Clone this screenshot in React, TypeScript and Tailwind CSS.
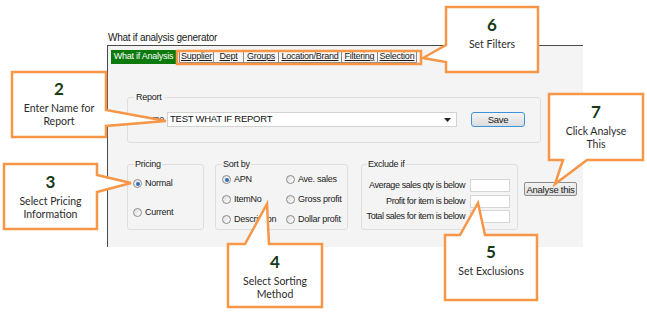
import React from "react";

const ORANGE = "#f79646";

function Radio({ checked = false }: { checked?: boolean }) {
  return (
    <span className="flex h-[9px] w-[9px] shrink-0 items-center justify-center rounded-full border border-[#8c8c8c] bg-linear-to-br from-[#dcdcdc] to-white">
      {checked && <span className="h-[4px] w-[4px] rounded-full bg-[#2f6db5]" />}
    </span>
  );
}

function Option({ label, checked }: { label: string; checked?: boolean }) {
  return (
    <div className="flex h-[13px] items-center gap-[3px]">
      <Radio checked={checked} />
      <span>{label}</span>
    </div>
  );
}

function Callout({
  left,
  top,
  width,
  num,
  lines,
}: {
  left: string;
  top: string;
  width: string;
  num: string;
  lines: string[];
}) {
  return (
    <div className={`absolute flex flex-col items-center font-['Lato',sans-serif] ${left} ${top} ${width}`}>
      <div className="text-[17px] font-bold leading-[16px] text-[#173a17]">{num}</div>
      <div className="mt-[5px] text-center text-[10.5px] leading-[13px] text-[#2b2b2b]">
        {lines.map((l) => (
          <div key={l}>{l}</div>
        ))}
      </div>
    </div>
  );
}

const tabs = [
  { label: "Supplier", w: "w-[35px]" },
  { label: "Dept", w: "w-[31px]" },
  { label: "Groups", w: "w-[36px]" },
  { label: "Location/Brand", w: "w-[64px]" },
  { label: "Filtering", w: "w-[37px]" },
  { label: "Selection", w: "w-[40px]" },
];

export default function App() {
  return (
    <div className="relative h-[313px] w-[647px] overflow-hidden bg-white font-['Liberation_Sans',sans-serif] text-[#1a1a1a]">
      {/* Title */}
      <div className="pl-[108px] pt-[31px] text-[10px] leading-[13px] tracking-[-0.25px]">What if analysis generator</div>

      {/* Window */}
      <div className="ml-[107px] mt-[1px] h-[202px] w-[476px] border-l border-t border-[#4a4a4a] bg-[#f4f4f4] text-[9px] tracking-[-0.25px]">
        {/* Tabs */}
        <div className="flex items-start pl-[3px] pt-[4px]">
          <div className="flex h-[14px] w-[65px] items-center justify-center bg-[#0b7a0b] text-white">What if Analysis</div>
          <div className="ml-[3px] mt-px flex">
            {tabs.map((t) => (
              <div
                key={t.label}
                className={`-ml-px flex h-[12px] items-center justify-center border border-[#8a8a8a] bg-[#f7f7f7] underline first:ml-0 ${t.w}`}
              >
                {t.label}
              </div>
            ))}
          </div>
        </div>

        {/* Report */}
        <fieldset className="ml-[19px] mt-[27px] h-[52px] w-[414px] rounded-[3px] border border-[#dedede]">
          <legend className="ml-[6px] px-[2px] leading-[12px]">Report</legend>
          <div className="flex items-center pl-[13px] pt-[9px]">
            <span className="w-[26px]">Name</span>
            <div className="flex h-[15px] w-[290px] items-center justify-between border border-[#d2d2d2] bg-white pl-[2px] pr-[5px] text-[9.5px] text-[#111]">
              <span>TEST WHAT IF REPORT</span>
              <svg width="7" height="4" viewBox="0 0 7 4">
                <polygon points="0,0 7,0 3.5,4" fill="#222" />
              </svg>
            </div>
            <button className="ml-[14px] h-[15px] w-[54px] rounded-[3px] border border-[#3d93da] bg-linear-to-b from-[#f4f4f4] to-[#dcdcdc] text-[9.5px]">
              Save
            </button>
          </div>
        </fieldset>

        {/* Lower row */}
        <div className="ml-[19px] mt-[15px] flex items-start">
          <fieldset className="h-[72px] w-[77px] rounded-[3px] border border-[#dedede]">
            <legend className="ml-[6px] px-[1px] leading-[12px]">Pricing</legend>
            <div className="flex flex-col gap-[16px] pl-[5px] pt-[7px]">
              <Option label="Normal" checked />
              <Option label="Current" />
            </div>
          </fieldset>

          <fieldset className="ml-[11px] h-[72px] w-[133px] rounded-[3px] border border-[#dedede]">
            <legend className="ml-[6px] px-[1px] leading-[12px]">Sort by</legend>
            <div className="grid grid-cols-[64px_1fr] gap-y-[7px] pl-[6px] pt-[3px]">
              <Option label="APN" checked />
              <Option label="Ave. sales" />
              <Option label="ItemNo" />
              <Option label="Gross profit" />
              <Option label="Description" />
              <Option label="Dollar profit" />
            </div>
          </fieldset>

          <fieldset className="ml-[13px] h-[72px] w-[157px] rounded-[3px] border border-[#dedede]">
            <legend className="ml-[5px] px-[1px] leading-[12px]">Exclude if</legend>
            <div className="grid grid-cols-[1fr_40px] items-center gap-x-[5px] gap-y-[2px] pr-[7px] pt-[9px] tracking-[-0.4px]">
              <span className="text-right">Average sales qty is below</span>
              <div className="h-[13px] border border-[#d6d6d6] bg-white" />
              <span className="text-right">Profit for item is below</span>
              <div className="h-[13px] border border-[#d6d6d6] bg-white" />
              <span className="text-right">Total sales for item is below</span>
              <div className="h-[13px] border border-[#d6d6d6] bg-white" />
            </div>
          </fieldset>

          <button className="ml-[6px] mt-[24px] h-[14px] w-[53px] rounded-[2px] border border-[#8e8e8e] bg-linear-to-b from-[#f3f3f3] to-[#dedede] text-[9.5px]">
            Analyse this
          </button>
        </div>
      </div>

      {/* Callout shapes */}
      <svg className="pointer-events-none absolute inset-0" width="647" height="313" viewBox="0 0 647 313">
        <g fill="white" stroke={ORANGE} strokeWidth="2.5" strokeLinejoin="miter">
          <rect x="177" y="51" width="244" height="13" fill="none" />
          <polygon points="446,7 538,7 538,72 446,72 446,62 423,58 446,45" />
          <polygon points="12,72 106,72 106,110 166,121 106,126 106,137 12,137" />
          <polygon points="4,164 97,164 97,175 131,183 97,192 97,229 4,229" />
          <polygon points="228,244 245,244 267,204 269,244 322,244 322,307 228,307" />
          <polygon points="445,235 460,235 478,203 485,235 537,235 537,300 445,300" />
          <polygon points="549,94 643,94 643,160 587,160 555,184 563,160 549,160" />
        </g>
      </svg>

      <Callout left="left-[446px]" top="top-[17px]" width="w-[92px]" num="6" lines={["Set Filters"]} />
      <Callout left="left-[12px]" top="top-[81px]" width="w-[94px]" num="2" lines={["Enter Name for", "Report"]} />
      <Callout left="left-[4px]" top="top-[174px]" width="w-[93px]" num="3" lines={["Select Pricing", "Information"]} />
      <Callout left="left-[228px]" top="top-[254px]" width="w-[94px]" num="4" lines={["Select Sorting", "Method"]} />
      <Callout left="left-[445px]" top="top-[244px]" width="w-[92px]" num="5" lines={["Set Exclusions"]} />
      <Callout left="left-[549px]" top="top-[104px]" width="w-[94px]" num="7" lines={["Click Analyse", "This"]} />
    </div>
  );
}
